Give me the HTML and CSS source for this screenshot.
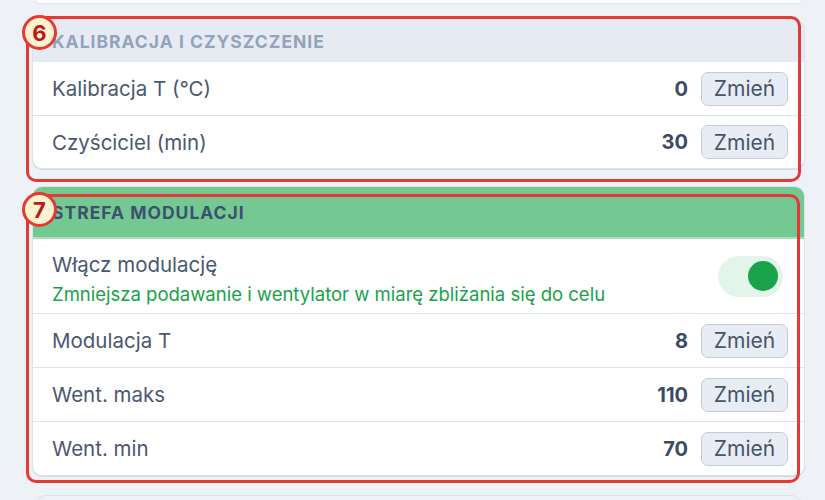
FILE: index.html
```html
<!DOCTYPE html>
<html lang="pl">
<head>
<meta charset="utf-8">
<link rel="stylesheet" href="styles.css">
</head>
<body>
<div class="column">
  <div class="stub"></div>

  <section class="block block-6">
    <div class="card">
      <div class="head head-gray">KALIBRACJA I CZYSZCZENIE</div>
      <div class="row">
        <span class="label">Kalibracja T (°C)</span>
        <span class="value">0</span>
        <button class="btn">Zmień</button>
      </div>
      <div class="row">
        <span class="label">Czyściciel (min)</span>
        <span class="value">30</span>
        <button class="btn">Zmień</button>
      </div>
    </div>
    <div class="mark mark-6"></div>
    <div class="badge badge-6">6</div>
  </section>

  <section class="block block-7">
    <div class="card">
      <div class="head head-green">STREFA MODULACJI</div>
      <div class="row row-toggle">
        <div class="texts">
          <span class="label">Włącz modulację</span>
          <span class="hint">Zmniejsza podawanie i wentylator w miarę zbliżania się do celu</span>
        </div>
        <span class="toggle"><span class="knob"></span></span>
      </div>
      <div class="row row-tall">
        <span class="label">Modulacja T</span>
        <span class="value">8</span>
        <button class="btn">Zmień</button>
      </div>
      <div class="row row-tall">
        <span class="label">Went. maks</span>
        <span class="value">110</span>
        <button class="btn">Zmień</button>
      </div>
      <div class="row row-tall">
        <span class="label">Went. min</span>
        <span class="value">70</span>
        <button class="btn">Zmień</button>
      </div>
    </div>
    <div class="mark mark-7"></div>
    <div class="badge badge-7">7</div>
  </section>

  <div class="next"></div>
</div>
</body>
</html>
```

FILE: styles.css
```css
* { box-sizing: border-box; }
html, body { margin: 0; padding: 0; }
body {
  background: #eef2f7;
  font-family: "Inter", "Liberation Sans", sans-serif;
  width: 825px;
  height: 500px;
  overflow: hidden;
}
.column {
  margin-left: 32px;
  width: 773px;
  display: flex;
  flex-direction: column;
}
.stub {
  height: 4px;
  margin: 0 3px 0 3px;
  background: #fff;
  border: 1px solid #dfe4ec;
  border-top: none;
  border-radius: 0 0 10px 10px;
}
.block { position: relative; }
.block-6 { margin-top: 15px; }
.block-7 { margin-top: 17px; }
.card {
  background: #fff;
  border: 1px solid #dde3ec;
  border-radius: 10px;
  overflow: hidden;
  box-shadow: 0 1px 0 #d3dae5;
}
.head {
  display: flex;
  align-items: center;
  padding-left: 19px;
  font-weight: 700;
  font-size: 17.5px;
  letter-spacing: 1px;
}
.head-gray {
  height: 42px;
  background: #e6ebf3;
  color: #93a3bb;
}
.head-green {
  height: 52px;
  background: #74c892;
  color: #3e5070;
  border-bottom: 2px solid #a8dfbb;
}
.row {
  display: flex;
  align-items: center;
  height: 53px;
  padding: 0 16px 0 19px;
  border-top: 1px solid #dfe4ec;
}
.row-tall { height: 54px; }
.head + .row { border-top: none; }
.label {
  font-size: 20.5px;
  color: #4b5872;
  flex: 1;
  line-height: 25px;
}
.value {
  font-size: 20px;
  font-weight: 700;
  color: #3d4a63;
  margin-right: 13px;
}
.btn {
  width: 87px;
  height: 34px;
  background: #e8edf5;
  border: 1.5px solid #c3ccdc;
  border-radius: 7px;
  font-family: inherit;
  font-size: 21px;
  color: #475569;
  padding: 0;
}
.row-toggle {
  height: 74px;
  align-items: center;
  padding-top: 5px;
}
.texts {
  flex: 1;
  display: flex;
  flex-direction: column;
  gap: 6px;
}
.hint {
  font-size: 18.5px;
  line-height: 22px;
  color: #17a349;
}
.toggle {
  width: 65px;
  height: 41px;
  border-radius: 21px;
  background: #e3f5ea;
  display: flex;
  align-items: center;
  justify-content: flex-end;
  padding-right: 5px;
  margin-right: 5px;
  margin-top: -5px;
}
.knob {
  width: 30px;
  height: 30px;
  border-radius: 50%;
  background: #19a34a;
}
.mark {
  position: absolute;
  border: 3px solid #e53935;
  border-radius: 10px;
  pointer-events: none;
}
.mark-6 { left: -6px; top: -3px; right: 4px; bottom: -13px; }
.mark-7 { left: -6px; top: 8px; right: 5px; bottom: -7px; }
.badge {
  position: absolute;
  left: -10px;
  width: 35px;
  height: 35px;
  border-radius: 50%;
  border: 3px solid #e53935;
  background: #fff3cf;
  color: #b71c1c;
  font-weight: 700;
  font-size: 22px;
  display: flex;
  align-items: center;
  justify-content: center;
}
.badge-6 { top: -4px; }
.badge-7 { top: 6px; }
.next {
  margin-top: 19px;
  margin-left: 3px;
  margin-right: 3px;
  height: 20px;
  background: #eef2f7;
  border: 1px solid #dde3ec;
  border-bottom: none;
  border-radius: 10px 10px 0 0;
}
```
